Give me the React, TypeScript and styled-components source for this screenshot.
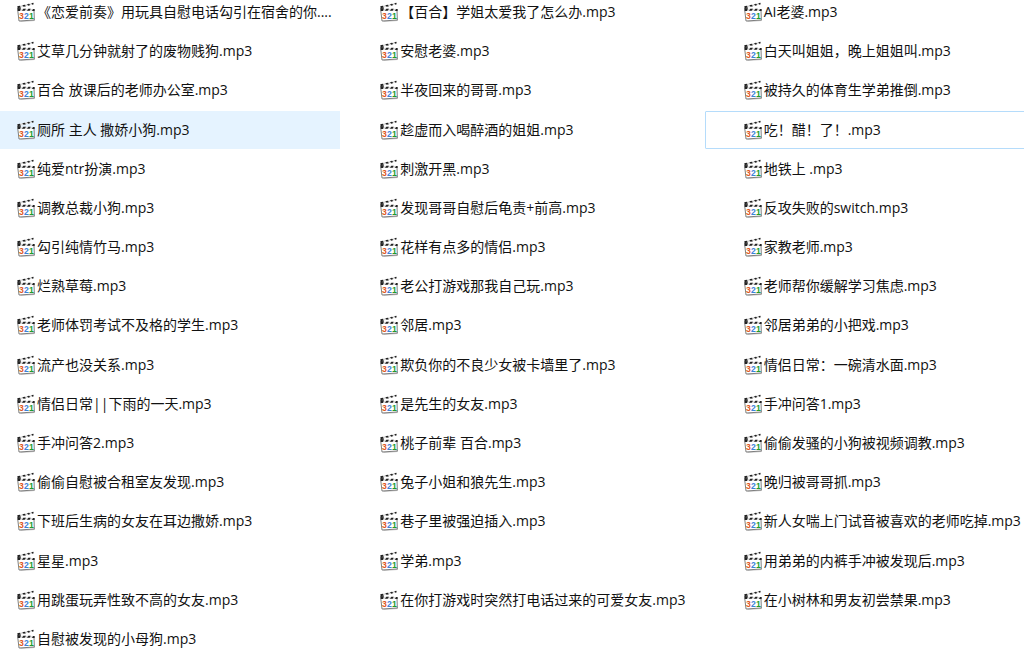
import React from "react";
import styled, { createGlobalStyle, css } from "styled-components";

const GlobalStyle = createGlobalStyle`
  * { box-sizing: border-box; }
  html, body {
    margin: 0;
    background: #fff;
    overflow: hidden;
  }
`;

const Pane = styled.main`
  min-height: 100vh;
  display: flow-root;
  overflow: hidden;
`;

const FileGrid = styled.ul`
  list-style: none;
  padding: 0;
  margin: -7px -43px -4px -22px;
  min-height: calc(100vh + 11px);
  display: grid;
  grid-template-columns: repeat(3, minmax(0, 1fr));
  grid-auto-rows: minmax(38px, 1fr);
  gap: 1px;
`;

const Cell = styled.li`
  display: flex;
  min-width: 0;
`;

type FileState = "hover" | "focus" | undefined;

const FileButton = styled.button<{ $state: FileState }>`
  flex: 1;
  min-width: 0;
  display: flex;
  align-items: center;
  gap: 2px;
  padding: 0 0 0 38px;
  border: 1px solid transparent;
  background: transparent;
  color: #111;
  font: 14px/20px "Open Sans", "Noto Sans CJK SC", sans-serif;
  text-align: left;
  outline: none;
  ${({ $state }) =>
    $state === "hover" &&
    css`
      background: #e5f3ff;
      border-color: #e5f3ff;
    `}
  ${({ $state }) =>
    $state === "focus" &&
    css`
      border-color: #b5dcfb;
      border-radius: 1px;
    `}
`;

const FileName = styled.span`
  white-space: pre;
`;

const Icon = styled.svg`
  flex: none;
  width: 18px;
  height: 18px;
  overflow: visible;
`;

const Digit = styled.text`
  font: bold 26px "Liberation Sans", sans-serif;
`;

function ClapperIcon() {
  return (
    <Icon viewBox="0 0 54 54" aria-hidden="true">
      <path d="M8 54 L54 51 L54 54 L12 57 Z" fill="#ccc" />
      <path d="M2 20 L51 22 L52 51 L6 54 Z" fill="#fff" stroke="#666" strokeWidth="2.5" />
      <path d="M1 10 L49 -1 L50 4 L2 16 Z" fill="#ddd" />
      <path d="M1 10 L8 8.500 L12 13.500 L2 16 Z M16 6.500 L23 5 L27 9.500 L20 11.500 Z M30 3.500 L36 2 L40 6 L34 8 Z M43 0.500 L49 -1 L50 4 L46 5 Z" fill="#222" />
      <path d="M1 17 L52 18 L52 24 L2 24 Z" fill="#ddd" />
      <path d="M1 15 L12 16 L9 24 L2 24 Z M19 17 L27 17 L23 23 L15 23 Z M34 17 L41 17 L38 23 L30 23 Z M48 18 L53 18 L53 24 L45 24 Z" fill="#222" />
      <Digit x="6" y="49" fill="#e0571c">3</Digit>
      <Digit x="21" y="48" fill="#3a82d8">2</Digit>
      <Digit x="36" y="47" fill="#229a2c">1</Digit>
    </Icon>
  );
}

const files: { name: string; state?: FileState }[] = [
  { name: "《恋爱前奏》用玩具自慰电话勾引在宿舍的你...." },
  { name: "【百合】学姐太爱我了怎么办.mp3" },
  { name: "AI老婆.mp3" },
  { name: "艾草几分钟就射了的废物贱狗.mp3" },
  { name: "安慰老婆.mp3" },
  { name: "白天叫姐姐，晚上姐姐叫.mp3" },
  { name: "百合 放课后的老师办公室.mp3" },
  { name: "半夜回来的哥哥.mp3" },
  { name: "被持久的体育生学弟推倒.mp3" },
  { name: "厕所 主人 撒娇小狗.mp3", state: "hover" },
  { name: "趁虚而入喝醉酒的姐姐.mp3" },
  { name: "吃！醋！了！.mp3", state: "focus" },
  { name: "纯爱ntr扮演.mp3" },
  { name: "刺激开黑.mp3" },
  { name: "地铁上 .mp3" },
  { name: "调教总裁小狗.mp3" },
  { name: "发现哥哥自慰后龟责+前高.mp3" },
  { name: "反攻失败的switch.mp3" },
  { name: "勾引纯情竹马.mp3" },
  { name: "花样有点多的情侣.mp3" },
  { name: "家教老师.mp3" },
  { name: "烂熟草莓.mp3" },
  { name: "老公打游戏那我自己玩.mp3" },
  { name: "老师帮你缓解学习焦虑.mp3" },
  { name: "老师体罚考试不及格的学生.mp3" },
  { name: "邻居.mp3" },
  { name: "邻居弟弟的小把戏.mp3" },
  { name: "流产也没关系.mp3" },
  { name: "欺负你的不良少女被卡墙里了.mp3" },
  { name: "情侣日常：一碗清水面.mp3" },
  { name: "情侣日常||下雨的一天.mp3" },
  { name: "是先生的女友.mp3" },
  { name: "手冲问答1.mp3" },
  { name: "手冲问答2.mp3" },
  { name: "桃子前辈 百合.mp3" },
  { name: "偷偷发骚的小狗被视频调教.mp3" },
  { name: "偷偷自慰被合租室友发现.mp3" },
  { name: "兔子小姐和狼先生.mp3" },
  { name: "晚归被哥哥抓.mp3" },
  { name: "下班后生病的女友在耳边撒娇.mp3" },
  { name: "巷子里被强迫插入.mp3" },
  { name: "新人女喘上门试音被喜欢的老师吃掉.mp3" },
  { name: "星星.mp3" },
  { name: "学弟.mp3" },
  { name: "用弟弟的内裤手冲被发现后.mp3" },
  { name: "用跳蛋玩弄性致不高的女友.mp3" },
  { name: "在你打游戏时突然打电话过来的可爱女友.mp3" },
  { name: "在小树林和男友初尝禁果.mp3" },
  { name: "自慰被发现的小母狗.mp3" },
];

export default function App() {
  return (
    <>
      <GlobalStyle />
      <Pane>
        <FileGrid>
          {files.map((file) => (
            <Cell key={file.name}>
              <FileButton type="button" $state={file.state}>
                <ClapperIcon />
                <FileName lang="zh-CN">{file.name}</FileName>
              </FileButton>
            </Cell>
          ))}
        </FileGrid>
      </Pane>
    </>
  );
}
